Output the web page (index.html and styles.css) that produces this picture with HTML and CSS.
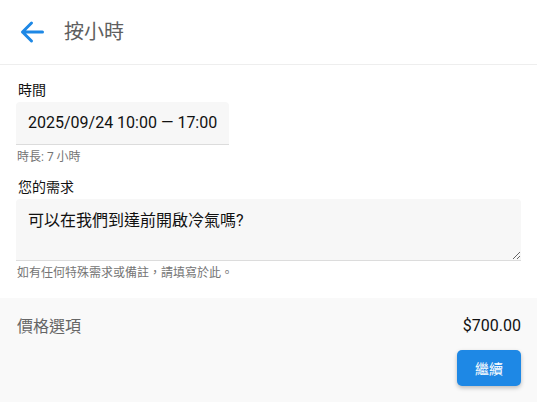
FILE: index.html
```html
<!DOCTYPE html>
<html lang="zh-Hant">
<head>
<meta charset="utf-8">
<link rel="stylesheet" href="styles.css">
</head>
<body>
<header class="topbar">
  <svg class="back" width="26" height="24" viewBox="0 0 26 24" aria-hidden="true">
    <path d="M23.5 12H3.5M12.5 3L3.5 12L12.5 21" fill="none" stroke="#1e88e5" stroke-width="3" stroke-linecap="round" stroke-linejoin="round"/>
  </svg>
  <h1 class="title">按小時</h1>
</header>
<main class="content">
  <div class="field">
    <label class="label">時間</label>
    <div class="input time-input">2025/09/24 10:00 — 17:00</div>
    <div class="hint">時長: 7 小時</div>
  </div>
  <div class="field field-notes">
    <label class="label">您的需求</label>
    <textarea class="input notes">可以在我們到達前開啟冷氣嗎?</textarea>
    <div class="hint">如有任何特殊需求或備註，請填寫於此。</div>
  </div>
</main>
<footer class="footer">
  <div class="price-row">
    <span class="price-label">價格選項</span>
    <span class="price">$700.00</span>
  </div>
  <div class="actions">
    <button class="btn">繼續</button>
  </div>
</footer>
</body>
</html>
```
FILE: styles.css
```css
* { box-sizing: border-box; }
html, body { margin: 0; padding: 0; background: #fff; }
body {
  font-family: Roboto, "Noto Sans CJK TC", sans-serif;
  color: #212121;
  width: 537px;
  height: 402px;
  overflow: hidden;
}
.topbar {
  height: 65px;
  display: flex;
  align-items: center;
  padding-left: 19px;
  border-bottom: 1px solid #eeeeee;
}
.back { display: block; margin-right: 19px; }
.title {
  margin: 0;
  font-size: 20px;
  font-weight: 400;
  color: #5f5f5f;
  line-height: 28px;
}
.content { padding: 15px 16px 0; }
.label {
  display: block;
  font-size: 14px;
  line-height: 20px;
  font-weight: 400;
  color: #111;
  margin-bottom: 2px;
  padding-left: 2px;
}
.input {
  background: #f7f7f7;
  border: none;
  border-bottom: 1px solid #dcdcdc;
  border-radius: 4px 4px 0 0;
  font-family: Roboto, "Noto Sans CJK TC", sans-serif;
  color: #111;
  font-size: 16px;
}
.time-input {
  width: 213px;
  height: 43px;
  line-height: 42px;
  padding: 0 12px;
  white-space: nowrap;
}
.notes {
  display: block;
  width: 505px;
  height: 62px;
  padding: 10px 12px;
  line-height: 24px;
  resize: vertical;
  margin: 0;
  outline: none;
}
.hint {
  font-size: 12px;
  line-height: 16px;
  color: #757575;
  margin-top: 4px;
  padding-left: 1px;
}
.field-notes { margin-top: 12px; }
.footer {
  margin-top: 17px;
  background: #f9f9f9;
  padding: 15px 16px 16px 17px;
  height: 106px;
}
.price-row {
  display: flex;
  justify-content: space-between;
  align-items: center;
  height: 24px;
}
.price-label { font-size: 16px; color: #666; }
.price { font-size: 16px; color: #111; }
.actions {
  display: flex;
  justify-content: flex-end;
  margin-top: 13px;
}
.btn {
  height: 36px;
  width: 64px;
  border: none;
  border-radius: 5px;
  background: #1e88e5;
  color: #fff;
  font-family: Roboto, "Noto Sans CJK TC", sans-serif;
  font-size: 14px;
  padding: 0;
  box-shadow: 0 2px 4px rgba(0,0,0,0.25);
}
```
